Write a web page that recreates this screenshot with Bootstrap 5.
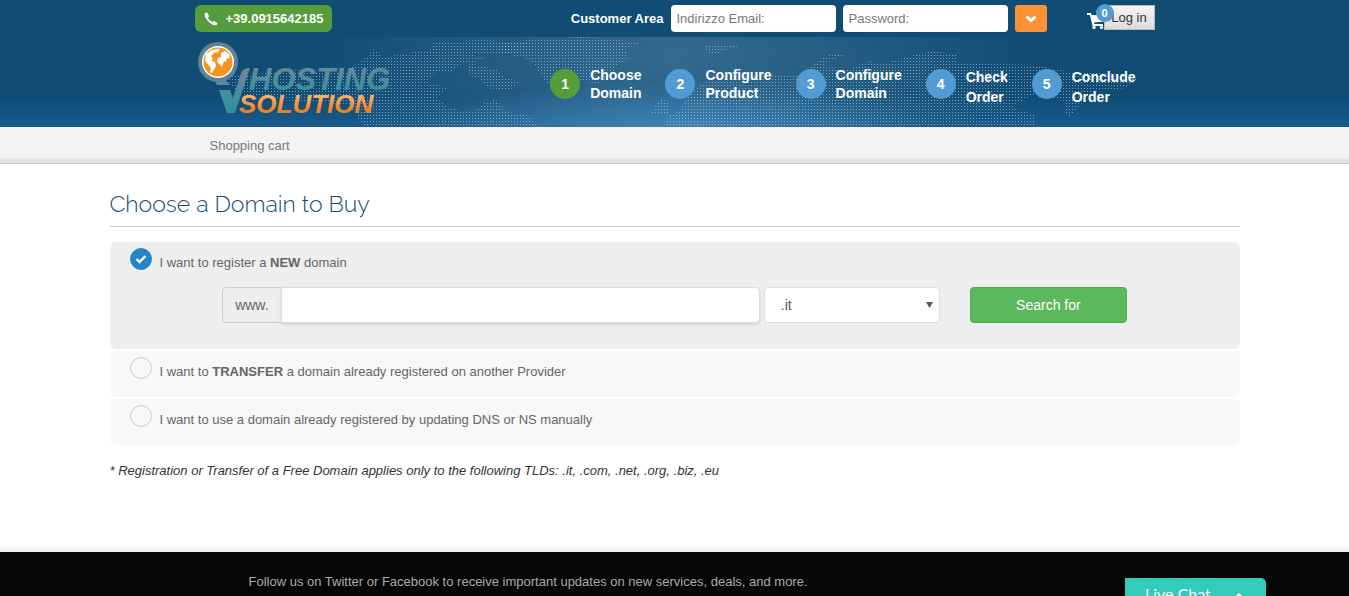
<!DOCTYPE html>
<html lang="en">
<head>
<meta charset="utf-8">
<meta name="viewport" content="width=device-width, initial-scale=1">
<title>VHosting Solution - Choose a Domain to Buy</title>
<link href="https://cdn.jsdelivr.net/npm/bootstrap@5.3.0/dist/css/bootstrap.min.css" rel="stylesheet">
<style>
body{font-family:"Liberation Sans",Arial,sans-serif;font-size:13px;line-height:20px;color:#333}
.site-head{background:linear-gradient(#114c75 0,#114c75 76%,#185b8d 100%);color:#fff}
.site-width{max-width:960px}
.main-width{max-width:1130px}
.top-row{padding-top:5px;height:37px}
.top-row .btn{font-size:13px;line-height:20px}
.btn-phone{background:#559d3b;color:#fff;height:27px;padding:0 9px;border:0}
.btn-phone:hover{background:#4a8a33;color:#fff}
.login-form{gap:7px}
.login-field{width:165px;height:27px;padding:0 6px;font-size:13px;border:0;border-radius:4px}
.login-field::placeholder{color:#777}
.btn-go{background:#fd9135;width:32px;height:27px;border:0;border-radius:3px;padding:0}
.cart-box{margin-left:40px}
.cart-count{position:absolute;left:9px;top:-1px;width:18px;height:18px;border-radius:50%;background:#529cd6;font-size:11px;line-height:18px;font-weight:700;text-align:center;color:#fff}
.btn-login{height:25px;width:51px;padding:0;border:1px solid #bbb;border-radius:0;background:linear-gradient(#f5f5f5,#dcdcdc);color:#333}
.map-band{height:90px;background:radial-gradient(ellipse 260px 55px at 50% 108%,rgba(74,146,200,.75),transparent),radial-gradient(ellipse 360px 130px at 50% 20%,rgba(76,126,160,.62),transparent)}
.map-art{position:absolute;left:0;top:0;width:960px;height:90px}
.logo-link{margin:5px 0 0 2px}
.steps{gap:24px;padding:29px 19px 0 0;font-size:14px;font-weight:700;line-height:18px}
.steps li{gap:10px}
.step-loose{line-height:20px;padding-top:1px}
.step-num{width:30px;height:30px;border-radius:50%;background:#529cd6;line-height:30px;text-align:center;margin-top:3px}
.step-loose .step-num{margin-top:2px}
.step-num.current{background:#559d3b}
.crumb-bar{background:linear-gradient(#f3f3f3 0,#f3f3f3 84%,#e4e4e4 90%,#e4e4e4 100%);border-bottom:1px solid #c8c8c8;height:37px;color:#777}
.crumb-bar .breadcrumb{padding:9px 15px 0}
.page-title{font-family:Raleway,Lato,sans-serif;font-weight:300;font-size:23px;line-height:32px;color:#114c75;padding-bottom:6px;margin-bottom:15px;border-bottom:1px solid #c8c8c8}
.choice{background:#f8f8f8;border-radius:6px;min-height:46px;padding:6px 20px 0;color:#666;margin-bottom:2px}
.choice.active{background:#eee;padding-bottom:26px}
.choice .form-check-input{width:22px;height:22px;margin:0 8px 0 0;border:1px solid #ccc;background-color:transparent}
.choice .form-check-input:checked{background-color:#2585c4;border-color:#2585c4;background-size:12px 12px;background-image:url("data:image/svg+xml,%3Csvg xmlns='http://www.w3.org/2000/svg' viewBox='0 0 12 12'%3E%3Cpath d='M1.5 6l3 3 6-6' fill='none' stroke='white' stroke-width='2.4'/%3E%3C/svg%3E")}
.choice .choice-text{padding-top:5px}
.search-row{margin:14px 8.5% 0;gap:4px}
.search-row .input-group-text{width:60px;padding:0 12px;font-size:14px;background:#eee;color:#666;border-color:#ccc;border-radius:4px}
.search-row .form-control,.search-row .form-select{height:36px;font-size:14px;border-color:#ddd;border-radius:4px}
.search-row .form-control{box-shadow:0 2px 3px rgba(0,0,0,.12)}
.search-row .form-select{width:176px;flex:none;padding:0 16px;color:#555;background-size:7px 7px;background-position:right 6px center;background-image:url("data:image/svg+xml,%3Csvg xmlns='http://www.w3.org/2000/svg' viewBox='0 0 7 7'%3E%3Cpath d='M0 0h7L3.500 6z' fill='%23555'/%3E%3C/svg%3E")}
.btn-search{width:157px;height:36px;margin-left:26px;padding:0;background:#5cb85c;border-color:#4fa950;color:#fff;font-size:14px;border-radius:4px}
.tld-note{margin:16px 0 64px;font-style:italic}
.foot-shade{height:7px;background:linear-gradient(#fff,#eee)}
.foot-wrap{background:#060606}
.site-foot{color:#aaa;padding:20px 0 0 54px}
.chat-tab{right:83px;bottom:-18px;width:141px;height:36px;background:#33cbbb;border:0;border-radius:0 5px 0 0;color:#fff;font-family:Lato,sans-serif;font-size:16px;line-height:20px;padding:6px 20px}
</style>
<script src="https://cdn.jsdelivr.net/npm/bootstrap@5.3.0/dist/js/bootstrap.bundle.min.js"></script>
</head>
<body class="d-flex flex-column min-vh-100">
<header class="site-head">
  <div class="container-fluid site-width px-0 d-flex align-items-start top-row">
    <a class="btn btn-phone fw-bold d-flex align-items-center" href="#">
      <svg class="me-2" width="14" height="14" viewBox="0 0 14 14" fill="#fff" aria-hidden="true"><path d="M1 1.500Q2 .5 3 .6L5 4Q5 5 3.800 5.700Q5.500 8.800 8.300 10.200Q9.200 8.700 10.200 9L13.400 11Q13.500 12.200 12.400 13.100Q9.500 14 5.500 10.500Q-.3 5 1 1.500z"/></svg>+39.0915642185</a>
    <form class="d-flex align-items-center ms-auto login-form">
      <span class="fw-bold">Customer Area</span>
      <input class="form-control login-field" type="email" placeholder="Indirizzo Email:" aria-label="Indirizzo Email">
      <input class="form-control login-field" type="password" placeholder="Password:" aria-label="Password">
      <button class="btn btn-go d-flex align-items-center justify-content-center" type="button" aria-label="Enter">
        <svg width="12" height="8" viewBox="0 0 12 8" fill="none" stroke="#fff" stroke-width="3"><path d="M1.500 1.500L6 5.500L10.500 1.500"/></svg>
      </button>
    </form>
    <div class="cart-box position-relative d-flex">
      <a href="#" aria-label="Cart"><svg width="17" height="25" viewBox="0 0 17 25" fill="#fff"><path d="M0 8h4l.7 2H17v6.500l-10 1 .3 1.500H16v2H5.500L3 10H0z"/><circle cx="7" cy="22.500" r="1.700"/><circle cx="14.500" cy="22.500" r="1.700"/></svg></a>
      <button class="btn btn-login" type="button">Log in</button>
      <span class="cart-count">0</span>
    </div>
  </div>
  <div class="map-band">
    <div class="container-fluid site-width px-0 position-relative">
      <svg class="map-art" viewBox="195 37 960 90" aria-hidden="true">
        <defs><pattern id="dots" width="3" height="3" patternUnits="userSpaceOnUse"><rect x="1" y="1" width="1" height="1" fill="#b6d3e5" opacity=".62"/></pattern></defs>
        <g fill="url(#dots)">
          <path d="M364 127L355 114 345 104 300 102 246 96 228 84 230 76 300 70 345 72 368 56 373 49 385 58 400 54 430 50 434 42 480 40 530 42 515 53 470 54 485 59 460 65 450 73 435 72 428 82 447 88 436 98 450 108 472 112 483 104 495 99 508 112 530 116 540 127z"/>
          <path d="M500 43L540 39 580 37 605 38 640 43 625 49 629 60 618 64 610 80 594 84 565 76 552 87 545 82 537 68 527 59 500 52z"/>
          <path d="M468 63L498 70 505 78 521 82 508 91 488 88 480 79 468 75z"/>
          <path d="M705 46L724 44 740 46 728 49 718 53 707 53z"/>
          <path d="M650 115L661 98 670 104 668 114z"/>
          <path d="M665 127L668 116 680 111 688 96 700 84 730 76 770 74 800 76 812 65 828 55 845 55 830 61 820 67 850 68 870 61 885 63 918 54 934 51 958 55 956 62 990 64 1035 65 1070 72 1125 74 1137 80 1125 88 1090 92 1081 104 1070 117 1065 114 1065 101 1030 96 1012 107 1034 115 1034 127z"/>
        </g>
      </svg>
      <div class="d-flex justify-content-between align-items-start position-relative">
        <a class="logo-link" href="#" aria-label="VHosting Solution">
          <svg width="197" height="79" viewBox="197 41 197 79">
            <defs>
              <linearGradient id="teal" x1="0" y1="0" x2="0" y2="1"><stop offset=".2" stop-color="#66899a"/><stop offset=".85" stop-color="#32919e"/></linearGradient>
              <linearGradient id="sun" x1="0" y1="0" x2="0" y2="1"><stop offset=".25" stop-color="#f9b064"/><stop offset=".75" stop-color="#f47d17"/></linearGradient>
            </defs>
            <path d="M214 78H225L230 84H217zM219 89H230L233 97 241 72Q243 67 250 67L238 103 235 112H227z" fill="url(#teal)"/>
            <circle cx="218" cy="61" r="20" fill="#5e8397"/><circle cx="218" cy="61" r="16" fill="#fff"/><circle cx="218" cy="61" r="14.500" fill="#f6921e"/>
            <path d="M206 53L212 49 220 47.500 218 51 214 52 211 55 213 58 211 60 215 61 216 65 212 72 210 71 211 67 207 62 205 60zM221 52L225 50 230 54 229 58 227 57 226 61 224 60 222 66 219 63 217 60 218 57 221 56z" fill="#fff"/>
            <g font-family="Liberation Sans,Arial,sans-serif" font-style="italic" font-weight="700">
              <text x="249" y="89" font-size="31" fill="url(#teal)">HOSTING</text>
              <text x="239" y="112" font-size="26" fill="url(#sun)">SOLUTION</text>
            </g>
          </svg>
        </a>
        <ol class="steps list-unstyled d-flex mb-0">
          <li class="d-flex"><span class="step-num current">1</span><span>Choose<br>Domain</span></li>
          <li class="d-flex"><span class="step-num">2</span><span>Configure<br>Product</span></li>
          <li class="d-flex"><span class="step-num">3</span><span>Configure<br>Domain</span></li>
          <li class="d-flex step-loose"><span class="step-num">4</span><span>Check<br>Order</span></li>
          <li class="d-flex step-loose"><span class="step-num">5</span><span>Conclude<br>Order</span></li>
        </ol>
      </div>
    </div>
  </div>
</header>
<nav class="crumb-bar" aria-label="breadcrumb">
  <div class="container-fluid site-width px-0"><ol class="breadcrumb mb-0"><li>Shopping cart</li></ol></div>
</nav>
<main class="container-fluid main-width px-0 pt-4">
  <h1 class="page-title">Choose a Domain to Buy</h1>
  <form>
    <section class="choice active">
      <div class="d-flex align-items-start">
        <input class="form-check-input" type="radio" name="mode" id="modeNew" checked>
        <label class="choice-text" for="modeNew">I want to register a <b>NEW</b> domain</label>
      </div>
      <div class="search-row d-flex">
        <div class="input-group">
          <label class="input-group-text" for="domain">www.</label>
          <input class="form-control" id="domain" type="text">
        </div>
        <select class="form-select" aria-label="Extension"><option>.it</option><option>.com</option><option>.net</option><option>.org</option></select>
        <button class="btn btn-search flex-shrink-0" type="button">Search for</button>
      </div>
    </section>
    <section class="choice d-flex align-items-start">
      <input class="form-check-input" type="radio" name="mode" id="modeTransfer">
      <label class="choice-text" for="modeTransfer">I want to <b>TRANSFER</b> a domain already registered on another Provider</label>
    </section>
    <section class="choice d-flex align-items-start">
      <input class="form-check-input" type="radio" name="mode" id="modeDns">
      <label class="choice-text" for="modeDns">I want to use a domain already registered by updating DNS or NS manually</label>
    </section>
  </form>
  <p class="tld-note">* Registration or Transfer of a Free Domain applies only to the following TLDs: .it, .com, .net, .org, .biz, .eu</p>
</main>
<div class="foot-shade"></div>
<footer class="flex-grow-1 foot-wrap">
  <div class="container-fluid site-width site-foot">Follow us on Twitter or Facebook to receive important updates on new services, deals, and more.</div>
</footer>
<button class="chat-tab position-fixed d-flex justify-content-between" type="button">Live Chat
  <svg class="mt-2" width="14" height="10" viewBox="0 0 14 10" fill="none" stroke="#fff" stroke-width="3"><path d="M1.500 8L7 3L12.500 8"/></svg>
</button>
</body>
</html>
